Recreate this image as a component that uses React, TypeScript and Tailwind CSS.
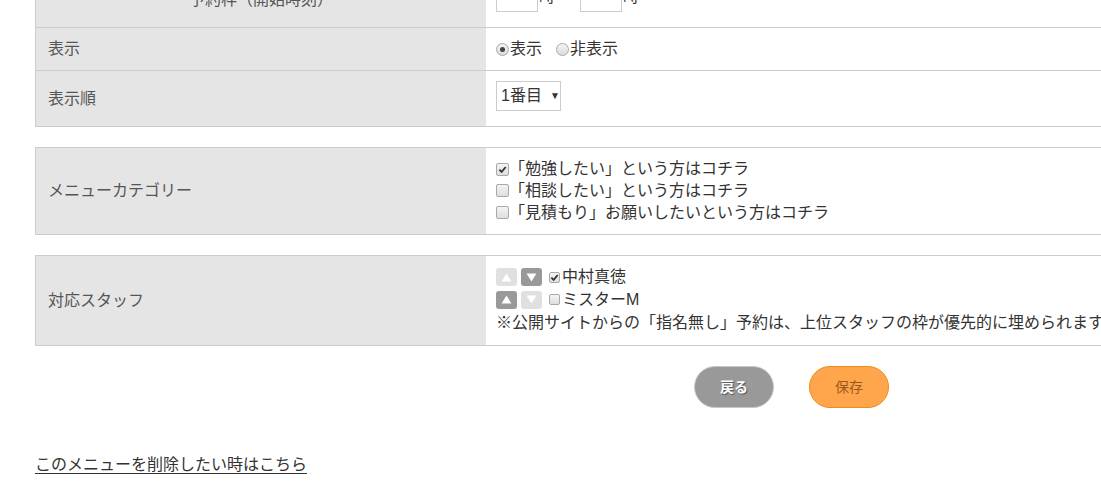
import React from "react";

const Check = () => (
  <svg viewBox="0 0 10 10" className="w-[9px] h-[9px]">
    <path d="M1.5 5.2 L4 7.6 L8.6 2.2" fill="none" stroke="#333" strokeWidth="2" />
  </svg>
);

function CheckBox({ checked, small }: { checked?: boolean; small?: boolean }) {
  return (
    <span
      className={
        (small ? "w-[11px] h-[11px] " : "w-[13px] h-[13px] ") +
        "inline-flex items-center justify-center shrink-0 rounded-[2px] border border-[#a9a9a9] bg-gradient-to-b from-[#f4f4f4] to-[#dedede]"
      }
    >
      {checked && <Check />}
    </span>
  );
}

function Radio({ checked }: { checked?: boolean }) {
  return (
    <span className="inline-flex items-center justify-center w-[13px] h-[13px] shrink-0 rounded-full border border-[#a9a9a9] bg-gradient-to-b from-[#f4f4f4] to-[#dcdcdc]">
      {checked && <span className="w-[5px] h-[5px] rounded-full bg-[#444]" />}
    </span>
  );
}

function ArrowBtn({ dir, active }: { dir: "up" | "down"; active: boolean }) {
  return (
    <span
      className={
        (active ? "bg-[#999999] " : "bg-[#e0e0e0] ") +
        "inline-flex items-center justify-center w-[21px] h-[18px] rounded-[3px]"
      }
    >
      <svg viewBox="0 0 12 10" className="w-[11px] h-[9px]">
        {dir === "up" ? (
          <path d="M6 0.5 L11.5 9.5 L0.5 9.5 Z" fill="#fff" />
        ) : (
          <path d="M0.5 0.5 L11.5 0.5 L6 9.5 Z" fill="#fff" />
        )}
      </svg>
    </span>
  );
}

function Row({
  label,
  children,
  center,
  last,
  valueClass = "py-[10px]",
}: {
  label: string;
  children: React.ReactNode;
  center?: boolean;
  last?: boolean;
  valueClass?: string;
}) {
  return (
    <div className={"flex" + (last ? "" : " border-b border-[#cccccc]")}>
      <div
        className={
          "w-[450px] shrink-0 bg-[#e5e5e5] px-3 flex items-center text-[#555555]" +
          (center ? " justify-center" : "")
        }
      >
        {label}
      </div>
      <div className={"flex-1 px-[10px] " + valueClass}>{children}</div>
    </div>
  );
}

export default function App() {
  return (
    <div
      className="h-[501px] overflow-hidden bg-white text-[16px] leading-[22px] text-[#333333]"
      style={{ fontFamily: '"Liberation Sans", "Noto Sans CJK JP", sans-serif' }}
    >
      <div className="-mt-[29px] pl-[35px] flex flex-col">
        {/* 基本設定 */}
        <div className="w-[1200px] border border-[#cccccc]">
          <Row label="予約枠（開始時刻）" center valueClass="pt-[10px] pb-[15px]">
            <div className="flex items-center gap-[1px]">
              <span className="w-[42px] h-[30px] border border-[#cccccc]" />
              <span className="mr-[24px]">時</span>
              <span className="w-[42px] h-[30px] border border-[#cccccc]" />
              <span>時</span>
            </div>
          </Row>
          <Row label="表示">
            <div className="flex items-center">
              <Radio checked />
              <span className="ml-[1px] mr-[14px]">表示</span>
              <Radio />
              <span className="ml-[1px]">非表示</span>
            </div>
          </Row>
          <Row label="表示順" last valueClass="pt-[10px] pb-[15px]">
            <div className="inline-flex items-center h-[30px] w-[65px] border border-[#cccccc] pl-[4px] gap-[8px]">
              <span>1番目</span>
              <span className="text-[10px] text-[#333333]">▼</span>
            </div>
          </Row>
        </div>

        {/* カテゴリー */}
        <div className="w-[1200px] mt-[20px] border border-[#cccccc]">
          <Row label="メニューカテゴリー" last>
            <div className="flex flex-col">
              <div className="flex items-center h-[22px]">
                <CheckBox checked />
                <span>「勉強したい」という方はコチラ</span>
              </div>
              <div className="flex items-center h-[21px]">
                <CheckBox />
                <span>「相談したい」という方はコチラ</span>
              </div>
              <div className="flex items-center h-[23px]">
                <CheckBox />
                <span>「見積もり」お願いしたいという方はコチラ</span>
              </div>
            </div>
          </Row>
        </div>

        {/* スタッフ */}
        <div className="w-[1200px] mt-[20px] border border-[#cccccc]">
          <Row label="対応スタッフ" last>
            <div className="flex flex-col">
              <div className="flex items-center h-[22px] gap-[4px]">
                <ArrowBtn dir="up" active={false} />
                <ArrowBtn dir="down" active />
                <span className="ml-[3px] flex items-center">
                  <CheckBox checked small />
                  <span className="ml-[2px]">中村真徳</span>
                </span>
              </div>
              <div className="flex items-center h-[23px] gap-[4px]">
                <ArrowBtn dir="up" active />
                <ArrowBtn dir="down" active={false} />
                <span className="ml-[3px] flex items-center">
                  <CheckBox small />
                  <span className="ml-[2px]">ミスターM</span>
                </span>
              </div>
              <div className="h-[24px] flex items-center whitespace-nowrap">
                ※公開サイトからの「指名無し」予約は、上位スタッフの枠が優先的に埋められます。
              </div>
            </div>
          </Row>
        </div>

        {/* ボタン */}
        <div className="mt-[20px] flex gap-[35px] pl-[659px]">
          <button className="w-[80px] h-[42px] rounded-full bg-[#999999] border border-[#c8c8c8] text-white text-[14px] font-bold [text-shadow:1px_1px_1px_#555]">
            戻る
          </button>
          <button className="w-[80px] h-[42px] rounded-full bg-[#ffa64d] border border-[#f08a1a] text-[#9a5a17] text-[14px]">
            保存
          </button>
        </div>

        <div className="mt-[46px]">
          <a className="underline underline-offset-[3px] text-[#333333] cursor-pointer">
            このメニューを削除したい時はこちら
          </a>
        </div>
      </div>
    </div>
  );
}
